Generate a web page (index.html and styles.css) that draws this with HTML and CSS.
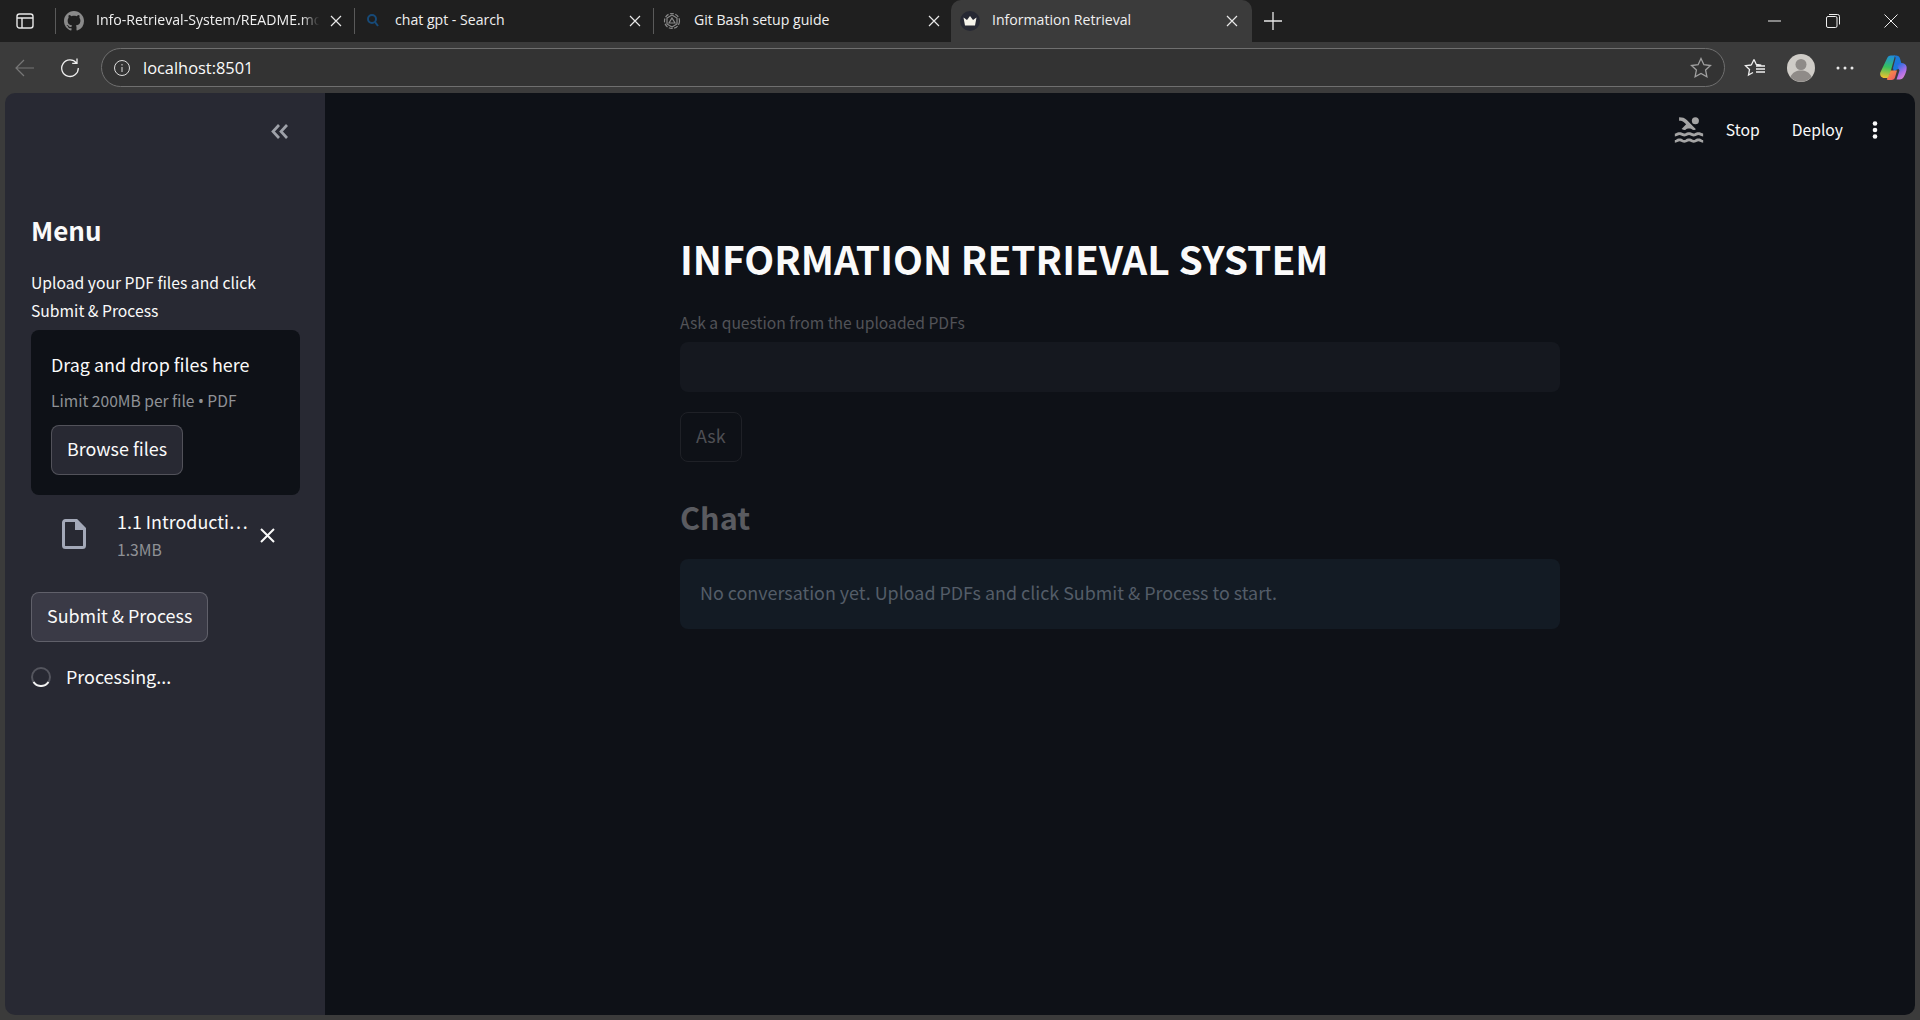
FILE: index.html
```html
<!doctype html>
<html>
  <head>
    <meta charset="utf-8">
    <meta name="viewport" content="width=device-width, initial-scale=1.0"/>
    <title>Information Retrieval</title>
    <link rel="stylesheet" href="styles.css">
  </head>
  <body>
    <header class="tabstrip">
      <svg class="tab-panel-icon" width="18" height="18" viewBox="0 0 18 18" fill="none" stroke="#e8e8e8" stroke-width="1.4"><rect x="1" y="2" width="16" height="14" rx="2.5"/><path d="M1 6h16M6 6v10"/></svg>
      <div class="tab tab-first">
        <svg class="fav" width="20" height="20" viewBox="0 0 16 16" fill="#8a8a8a"><path d="M8 0C3.58 0 0 3.58 0 8c0 3.54 2.29 6.53 5.47 7.59.4.07.55-.17.55-.38 0-.19-.01-.82-.01-1.49-2.01.37-2.53-.49-2.69-.94-.09-.23-.48-.94-.82-1.13-.28-.15-.68-.52-.01-.53.63-.01 1.08.58 1.23.82.72 1.21 1.87.87 2.33.66.07-.52.28-.87.51-1.07-1.78-.2-3.64-.89-3.64-3.95 0-.87.31-1.59.82-2.15-.08-.2-.36-1.02.08-2.12 0 0 .67-.21 2.2.82.64-.18 1.32-.27 2-.27s1.36.09 2 .27c1.53-1.04 2.2-.82 2.2-.82.44 1.1.16 1.92.08 2.12.51.56.82 1.27.82 2.15 0 3.07-1.87 3.75-3.65 3.95.29.25.54.73.54 1.48 0 1.07-.01 1.93-.01 2.2 0 .21.15.46.55.38A8.01 8.01 0 0 0 16 8c0-4.42-3.58-8-8-8z"/></svg>
        <span class="tab-title tab-title-fade">Info-Retrieval-System/README.md</span>
        <svg class="tab-close" width="12" height="12" viewBox="0 0 12 12" stroke="#e8e8e8" stroke-width="1.2"><path d="M1 1l10 10M11 1L1 11"/></svg>
      </div>
      <div class="tab">
        <svg class="fav" width="20" height="20" viewBox="0 0 20 20" fill="none" stroke="#174a78" stroke-width="2"><circle cx="9" cy="8" r="4"/><path d="M12 11l3 4"/></svg>
        <span class="tab-title">chat gpt - Search</span>
        <svg class="tab-close" width="12" height="12" viewBox="0 0 12 12" stroke="#e8e8e8" stroke-width="1.2"><path d="M1 1l10 10M11 1L1 11"/></svg>
      </div>
      <div class="tab">
        <svg class="fav" width="20" height="20" viewBox="0 0 20 20" fill="none" stroke="#8a8a8a" stroke-width="1.2"><circle cx="10" cy="10" r="7.5" stroke-dasharray="4 1.5"/><path d="M10 4l5 3v6l-5 3-5-3V7z"/><path d="M10 7l3 5H7z"/></svg>
        <span class="tab-title">Git Bash setup guide</span>
        <svg class="tab-close" width="12" height="12" viewBox="0 0 12 12" stroke="#e8e8e8" stroke-width="1.2"><path d="M1 1l10 10M11 1L1 11"/></svg>
      </div>
      <div class="tab tab-active">
        <svg class="fav" width="20" height="20" viewBox="0 0 20 20"><circle cx="10" cy="10" r="10" fill="#262833"/><path d="M3.5 6.5l3.5 2.5 3-4 3 4 3.500-2.500-1.500 8h-10z" fill="#f4f2ea"/></svg>
        <span class="tab-title">Information Retrieval</span>
        <svg class="tab-close" width="12" height="12" viewBox="0 0 12 12" stroke="#e8e8e8" stroke-width="1.2"><path d="M1 1l10 10M11 1L1 11"/></svg>
      </div>
      <svg class="tab-new" width="18" height="18" viewBox="0 0 18 18" stroke="#e8e8e8" stroke-width="1.3"><path d="M9 0v18M0 9h18"/></svg>
      <div class="window-controls">
        <svg width="14" height="14" viewBox="0 0 14 14" stroke="#eee" stroke-width="1"><path d="M0 7h13"/></svg>
        <svg width="14" height="14" viewBox="0 0 14 14" fill="none" stroke="#eee" stroke-width="1"><rect x=".5" y="2.500" width="10.500" height="11" rx="1.500"/><path d="M3 .5h8.500q2 0 2 2v8"/></svg>
        <svg width="14" height="14" viewBox="0 0 14 14" stroke="#eee" stroke-width="1"><path d="M.5.500l13 13M13.500.500l-13 13"/></svg>
      </div>
    </header>

    <nav class="toolbar">
      <svg class="tool-back" width="20" height="20" viewBox="0 0 20 20" fill="none" stroke="#777" stroke-width="1.2"><path d="M19 10H1M9 2l-8 8 8 8"/></svg>
      <svg class="tool-reload" width="20" height="20" viewBox="0 0 20 20" fill="none" stroke="#eee" stroke-width="1.300"><path d="M16.500 5A8.300 8.300 0 1 0 18.300 10M17 .5V5.300h-4.800"/></svg>
      <div class="address">
        <svg width="16" height="16" viewBox="0 0 16 16" fill="none" stroke="#ddd" stroke-width="1"><circle cx="8" cy="8" r="7.500"/><path d="M8 7v5M8 4v1.500"/></svg>
        <span class="address-text">localhost:8501</span>
        <svg class="address-star" width="22" height="22" viewBox="0 0 22 22" fill="none" stroke="#a0a0a0" stroke-width="1.300"><path d="M11 1.500l2.900 6.200 6.600.8-4.900 4.600 1.300 6.700L11 16.500l-5.900 3.300 1.300-6.700L1.500 8.500l6.600-.8z"/></svg>
      </div>
      <div class="tool-icons">
        <svg width="22" height="20" viewBox="0 0 22 20" fill="none" stroke="#f0f0f0" stroke-width="1.300"><path d="M10 1.500l2.300 5 5 .6M7.300 7l-5.800.7 4 3.800-1 5.500 4.500-2.500M7.300 7L10 1.500M12 11h9M12 14h9M12 8h9"/></svg>
        <svg class="avatar" width="28" height="28" viewBox="0 0 28 28"><circle cx="14" cy="14" r="14" fill="#cfccc7"/><circle cx="14" cy="10.500" r="5.500" fill="#8f8b88"/><path d="M3.500 23c2-5 6-6.500 10.500-6.500S22.500 18 24.500 23A14 14 0 0 1 3.500 23z" fill="#8f8b88"/></svg>
        <svg class="more" width="18" height="4" viewBox="0 0 18 4" fill="#e8e8e8"><circle cx="2" cy="2" r="1.500"/><circle cx="9" cy="2" r="1.500"/><circle cx="16" cy="2" r="1.500"/></svg>
        <svg class="copilot" width="28" height="28" viewBox="0 0 28 28">
          <defs>
            <linearGradient id="cpA" x1="0.400" y1="0" x2="0.300" y2="1"><stop offset="0" stop-color="#1f8fd8"/><stop offset=".5" stop-color="#37c25d"/><stop offset="1" stop-color="#f2c12e"/></linearGradient>
            <linearGradient id="cpB" x1="0.300" y1="0" x2="0.800" y2="1"><stop offset="0" stop-color="#1f6fe0"/><stop offset=".55" stop-color="#a86de8"/><stop offset="1" stop-color="#e88ad0"/></linearGradient>
            <linearGradient id="cpC" x1="0" y1="0" x2="1" y2="1"><stop offset="0" stop-color="#f5a03a"/><stop offset="1" stop-color="#ef4f6a"/></linearGradient>
          </defs>
          <path d="M8 4.500C8.700 2.500 10 1.500 12 1.500h4L11.500 18 10 22.500c-.5 1-1.300 1.500-2.500 1.500H5.500C2.500 24 .5 21.500 1.300 18.500z" fill="url(#cpA)"/>
          <path d="M14 1.500h3c2 0 3.500 1 4 3l3 10.500h-3.500c-3 0-4.500 1.500-5.500 4L14 14l2.500-9.500C16.800 3 15.800 1.500 14 1.500z" fill="#1b78d8"/>
          <path d="M17 9h5.500c2.500 0 4.500 1.200 5 3.500.6 3-.8 7-2.500 10-1 2-2.500 3-4.500 3h-3l3-9z" fill="url(#cpB)"/>
          <path d="M11.500 16.500h6.500l-2 7c-.5 1.500-1.500 2.500-3.500 2.500H9c-1.300 0-1.300-.8-.8-1.700 1.500-1.800 2.700-4.800 3.300-7.800z" fill="url(#cpC)"/>
        </svg>
      </div>
    </nav>

    <div class="app">
      <aside class="sidebar">
        <div class="sidebar-collapse">
          <svg width="18" height="15" viewBox="0 0 18 15" fill="none" stroke="#9ea1a9" stroke-width="2.700"><path d="M8 1L2 7.500 8 14M16 1l-6 6.500 6 6.500"/></svg>
        </div>
        <h2 class="sidebar-title">Menu</h2>
        <p class="sidebar-text">Upload your PDF files and click Submit &amp; Process</p>
        <section class="dropzone">
          <div class="dropzone-main">Drag and drop files here</div>
          <div class="dropzone-hint">Limit 200MB per file <span class="bullet">•</span> PDF</div>
          <button class="btn btn-browse">Browse files</button>
        </section>
        <div class="file-row">
          <svg class="file-icon" width="24" height="30" viewBox="0 0 24 30" fill="none" stroke="#a3a8b8" stroke-width="3"><path d="M3.500 1.500h11l8 8v17a2 2 0 0 1-2 2h-17a2 2 0 0 1-2-2v-23a2 2 0 0 1 2-2z"/><path d="M14 2v8h8" fill="#a3a8b8" stroke="none"/><path d="M14 1v9h9" stroke-width="2"/></svg>
          <div class="file-info">
            <div class="file-name">1.1 Introducti…</div>
            <div class="file-size">1.3MB</div>
          </div>
          <svg class="file-remove" width="15" height="15" viewBox="0 0 15 15" stroke="#fafafa" stroke-width="2"><path d="M1 1l13 13M14 1L1 14"/></svg>
        </div>
        <button class="btn btn-submit">Submit &amp; Process</button>
        <div class="spinner-row">
          <svg width="20" height="20" viewBox="0 0 20 20" fill="none" stroke-width="2"><circle cx="10" cy="10" r="9" stroke="#54555e"/><path d="M2.500 15A9 9 0 0 0 17.500 15" stroke="#f2f2f2"/></svg>
          <span class="spinner-text">Processing...</span>
        </div>
      </aside>

      <main class="main">
        <div class="main-header">
          <svg class="swim-icon" width="34" height="34" viewBox="0 0 24 24" fill="#a4a4a4"><path d="M22 21c-1.110 0-1.730-.37-2.180-.64-.37-.22-.6-.36-1.150-.36-.56 0-.78.13-1.150.36-.46.27-1.070.64-2.180.64s-1.730-.37-2.180-.64c-.37-.22-.6-.36-1.150-.36-.56 0-.78.13-1.150.36-.46.27-1.080.64-2.190.64-1.110 0-1.730-.37-2.180-.64-.37-.23-.6-.36-1.150-.36s-.78.13-1.150.36c-.46.27-1.080.64-2.190.64v-2c.56 0 .78-.13 1.150-.36.46-.27 1.080-.64 2.190-.64s1.730.37 2.180.64c.37.23.59.36 1.150.36.56 0 .78-.13 1.150-.36.46-.27 1.080-.64 2.190-.64 1.110 0 1.730.37 2.180.64.37.22.6.36 1.150.36s.78-.13 1.150-.36c.45-.27 1.070-.64 2.180-.64s1.730.37 2.180.64c.37.23.59.36 1.150.36v2zm0-4.500c-1.110 0-1.730-.37-2.180-.64-.37-.22-.6-.36-1.150-.36-.56 0-.78.13-1.150.36-.45.27-1.070.64-2.180.64s-1.730-.37-2.180-.64c-.37-.22-.6-.36-1.150-.36-.56 0-.78.13-1.150.36-.45.27-1.070.64-2.180.64s-1.730-.37-2.180-.64c-.37-.22-.6-.36-1.150-.36s-.78.13-1.150.36c-.47.27-1.090.64-2.200.64v-2c.56 0 .78-.13 1.150-.36.45-.27 1.070-.64 2.180-.64s1.730.37 2.180.64c.37.22.6.36 1.150.36.56 0 .78-.13 1.150-.36.45-.27 1.070-.64 2.180-.64s1.730.37 2.180.64c.37.22.6.36 1.150.36s.78-.13 1.150-.36c.45-.27 1.070-.64 2.180-.64s1.730.37 2.180.64c.37.22.6.36 1.150.36v2zM8.670 12c.56 0 .78-.13 1.150-.36.46-.27 1.080-.64 2.190-.64 1.110 0 1.730.37 2.180.64.37.22.6.36 1.150.36s.78-.13 1.150-.36c.12-.07.26-.15.41-.23L10.480 5C8.930 3.450 7.500 2.990 5 3v2.500c1.820-.01 2.890.39 4 1.500l1 1-3.250 3.250c.31.12.56.27.78.4.37.23.59.35 1.140.35z"/><circle cx="16.500" cy="5.500" r="2.500"/></svg>
          <span class="header-stop">Stop</span>
          <span class="header-deploy">Deploy</span>
          <svg class="header-menu" width="6" height="18" viewBox="0 0 6 18" fill="#fafafa"><circle cx="3" cy="2.500" r="2.300"/><circle cx="3" cy="9" r="2.300"/><circle cx="3" cy="15.500" r="2.300"/></svg>
        </div>
        <div class="content">
          <h1 class="page-title">INFORMATION RETRIEVAL SYSTEM</h1>
          <label class="field-label">Ask a question from the uploaded PDFs</label>
          <div class="field-input"></div>
          <button class="btn btn-ask">Ask</button>
          <h2 class="chat-title">Chat</h2>
          <div class="notice">No conversation yet. Upload PDFs and click Submit &amp; Process to start.</div>
        </div>
      </main>
    </div>
  </body>
</html>
```

FILE: styles.css
```css
html, body {
  margin: 0;
  padding: 0;
  height: 100%;
  overflow: hidden;
}

body {
  display: flex;
  flex-direction: column;
  background: #3b3b3b;
  color: #fafafa;
  font-family: "Noto Sans CJK SC", "Source Sans Pro", sans-serif;
}

svg {
  display: block;
  flex: none;
}

/* browser chrome */
.tabstrip {
  display: flex;
  align-items: center;
  height: 42px;
  background: #1f1f1f;
  font-family: "Open Sans", sans-serif;
  font-size: 14.100px;
  color: #f0f0f0;
}

.tab-panel-icon {
  margin: 0 21px 0 16px;
}

.tab {
  display: flex;
  align-items: center;
  width: 299px;
  height: 26px;
  padding-left: 8px;
  padding-right: 12px;
  box-sizing: border-box;
  border-left: 1px solid #5a5a5a;
}

.fav {
  margin-right: 12px;
}

.tab-title {
  flex: 1;
  margin-top: -4px;
  white-space: nowrap;
  overflow: hidden;
}

.tab-title-fade {
  -webkit-mask-image: linear-gradient(90deg, #000 90%, transparent 98%);
  mask-image: linear-gradient(90deg, #000 90%, transparent 98%);
}

.tab-close {
  margin-left: 6px;
}

.tab-active {
  align-self: flex-end;
  width: 301px;
  height: 42px;
  margin-left: -1px;
  padding-left: 9px;
  padding-right: 14px;
  border-left: 0;
  border-radius: 10px 10px 0 0;
  background: #3b3b3b;
}

.tab-new {
  margin-left: 12px;
}

.window-controls {
  display: flex;
  gap: 44px;
  margin-left: auto;
  margin-right: 22px;
}

.toolbar {
  display: flex;
  align-items: center;
  height: 51px;
  flex: none;
}

.tool-back {
  margin-left: 15px;
}
.tool-reload {
  margin-left: 25px;
}

.address {
  display: flex;
  align-items: center;
  flex: none;
  width: 1624px;
  height: 39px;
  margin-left: 21px;
  padding: 0 12px 0 12px;
  box-sizing: border-box;
  border: 1px solid #6f6f6f;
  border-radius: 20px;
  background: #333;
  font-family: "Open Sans", sans-serif;
  font-size: 16.400px;
}
.address-text {
  margin-left: 13px;
  flex: 1;
}

.tool-icons {
  display: flex;
  align-items: center;
  margin-left: 19px;
}
.avatar {
  margin-left: 21px;
}
.more {
  margin-left: 21px;
}
.copilot {
  margin-left: 25px;
}

/* streamlit app */
.app {
  flex: 1;
  display: flex;
  min-height: 0;
  margin: 0 5px 5px;
  border-radius: 10px;
  overflow: hidden;
}

.sidebar {
  width: 320px;
  flex: none;
  box-sizing: border-box;
  padding: 31px 26px 0;
  background: #282933;
}

.sidebar-collapse {
  display: flex;
  justify-content: flex-end;
  padding-right: 10px;
}

.sidebar-title {
  margin: 71px 0 0;
  font-size: 26px;
  font-weight: 600;
  line-height: 40px;
}

.sidebar-text {
  margin: 19px 0 0;
  font-size: 15.700px;
  line-height: 28px;
}

.dropzone {
  margin-top: 5px;
  padding: 19px 20px 20px;
  height: 165px;
  width: 269px;
  box-sizing: border-box;
  border-radius: 8px;
  background: #0e1117;
}
.dropzone-main {
  font-size: 17.900px;
  line-height: 30px;
}
.dropzone-hint {
  margin-top: 6px;
  font-size: 15.600px;
  line-height: 30px;
  color: #8f9196;
}
.bullet {
  font-family: "Noto Sans", sans-serif;
}

.btn {
  display: block;
  height: 50px;
  padding: 0 15px 4px;
  box-sizing: border-box;
  border: 1px solid rgba(250, 250, 250, .2);
  border-radius: 8px;
  font: inherit;
  font-size: 17.900px;
  color: #fafafa;
}
.btn-browse {
  margin-top: 9px;
  background: #282933;
}
.btn-submit {
  margin-top: 29px;
  background: #3a3a46;
}

.file-row {
  display: flex;
  align-items: center;
  height: 68px;
  padding: 13px 0 0 31px;
  box-sizing: border-box;
}
.file-icon {
  margin-top: -4px;
}
.file-info {
  width: 138px;
  margin-left: 31px;
}
.file-name {
  font-size: 17.900px;
  line-height: 27px;
  white-space: nowrap;
}
.file-size {
  font-size: 15.700px;
  line-height: 29px;
  color: #8f9196;
}
.file-remove {
  margin-left: 5px;
}

.spinner-row {
  display: flex;
  align-items: center;
  gap: 15px;
  margin-top: 21px;
  font-size: 17.900px;
  line-height: 30px;
}
.spinner-text {
  margin-top: -2px;
}

.main {
  flex: 1;
  min-width: 0;
  background: #0e1117;
}

.main-header {
  display: flex;
  align-items: center;
  height: 74px;
  padding-right: 37px;
  font-size: 15.700px;
}
.swim-icon {
  margin-left: auto;
}
.header-stop {
  margin-left: 20px;
  margin-top: -2px;
}
.header-deploy {
  margin-left: 32px;
  margin-top: -2px;
}
.header-menu {
  margin-left: 29px;
}

.content {
  width: 880px;
  margin: 0 auto;
}

.page-title {
  margin: 61px 0 0;
  font-size: 38.900px;
  font-weight: 600;
  line-height: 60px;
}

.field-label {
  display: block;
  margin-top: 22px;
  font-size: 15.650px;
  line-height: 26px;
  color: #525358;
}

.field-input {
  height: 50px;
  margin-top: 6px;
  border-radius: 8px;
  background: #15181f;
}

.btn-ask {
  margin-top: 20px;
  background: transparent;
  border-color: #1f2127;
  color: #4e4f54;
}

.chat-title {
  margin: 29px 0 0;
  font-size: 30.600px;
  font-weight: 600;
  line-height: 52px;
  color: #5a5b60;
}

.notice {
  display: flex;
  align-items: center;
  height: 70px;
  margin-top: 16px;
  padding: 0 20px 4px;
  box-sizing: border-box;
  border-radius: 8px;
  background: #131b24;
  font-size: 17.900px;
  color: #545d68;
}
```
